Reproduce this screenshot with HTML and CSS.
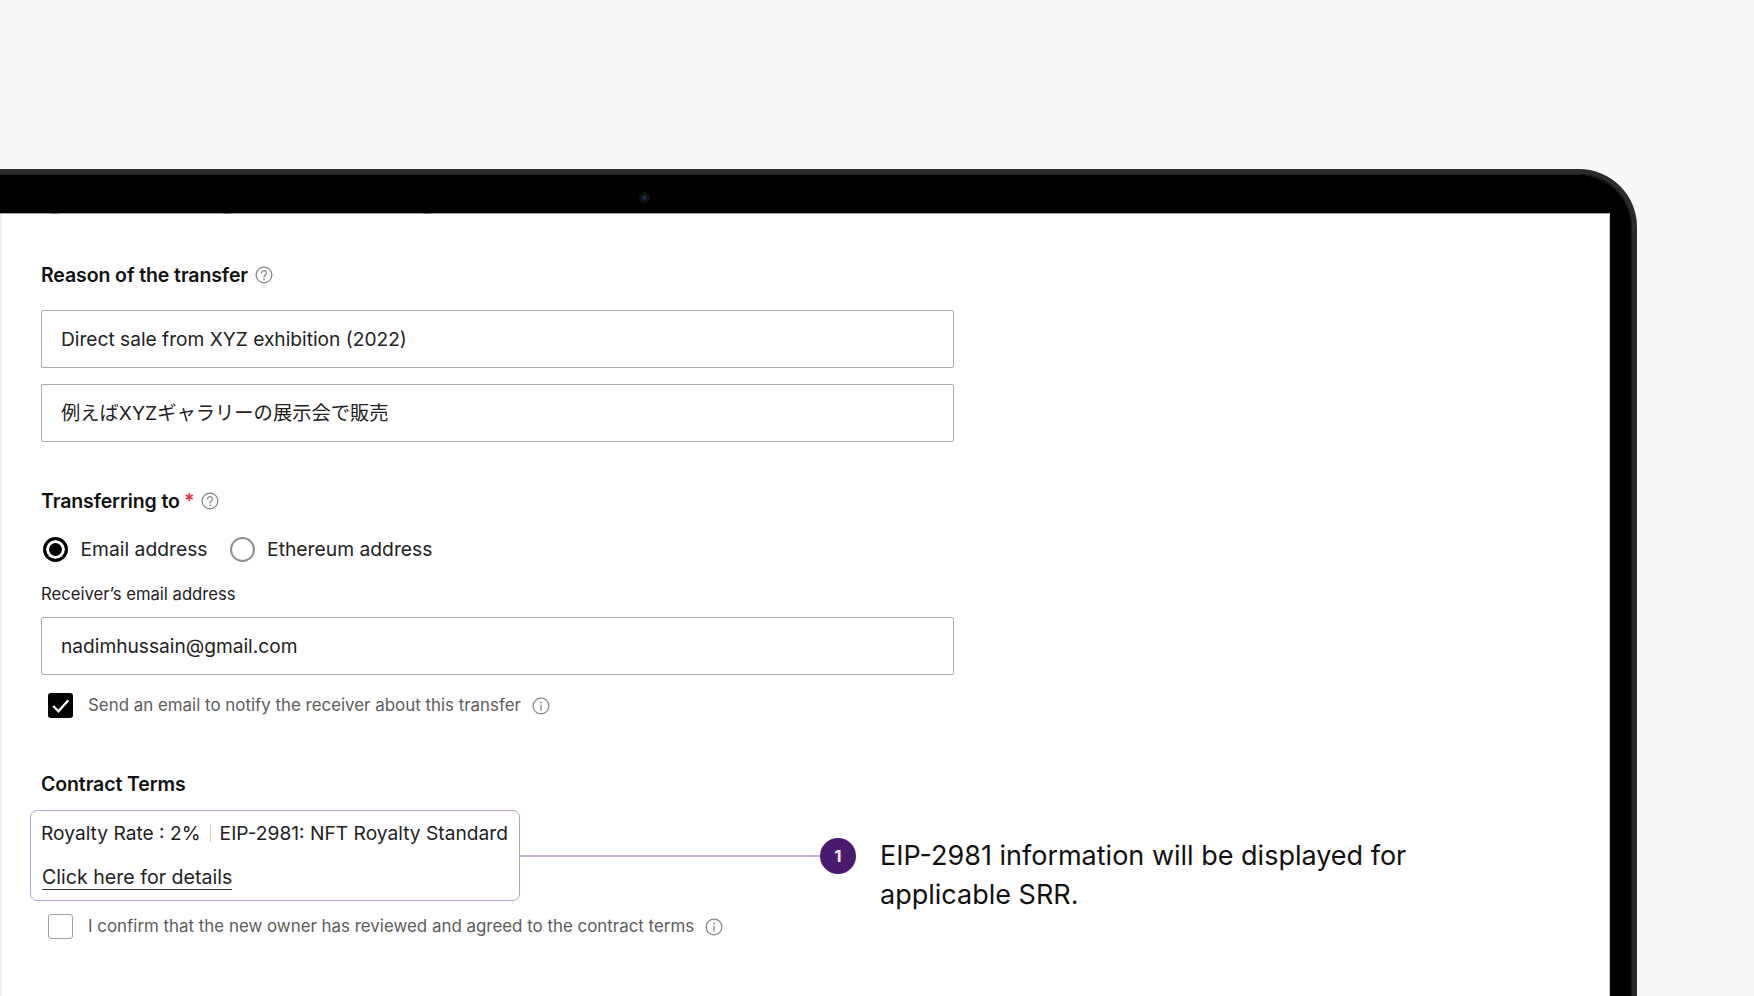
FILE: index.html
```html
<!DOCTYPE html>
<html lang="en">
<head>
<meta charset="utf-8">
<title>Transfer form</title>
<link rel="stylesheet" href="styles.css">
</head>
<body>
<main class="stage">
  <div class="laptop">
    <div class="bezel">
      <div class="camera-bar"><span class="camera"><span class="lens"></span></span></div>
      <div class="screen">
        <div class="clipped-row"><i class="speck s1"></i><i class="speck s2"></i><i class="speck s3"></i></div>

        <div class="label label-first">Reason of the transfer
          <svg class="icon help" viewBox="0 0 16 16"><circle cx="8" cy="8" r="7"/><path d="M5.9 6.2a2.1 2.1 0 1 1 3.3 1.7c-.8.5-1.2.9-1.2 1.8"/><circle class="dot" cx="8" cy="11.8" r=".8"/></svg>
        </div>
        <div class="input input-first">Direct sale from XYZ exhibition (2022)</div>
        <div class="input input-next input-jp">例えばXYZギャラリーの展示会で販売</div>

        <div class="label label-transfer">Transferring to <span class="req">*</span>
          <svg class="icon help" viewBox="0 0 16 16"><circle cx="8" cy="8" r="7"/><path d="M5.9 6.2a2.1 2.1 0 1 1 3.3 1.7c-.8.5-1.2.9-1.2 1.8"/><circle class="dot" cx="8" cy="11.8" r=".8"/></svg>
        </div>
        <div class="radios">
          <span class="radio radio-on"></span><span class="radio-text">Email address</span>
          <span class="radio radio-off"></span><span class="radio-text">Ethereum address</span>
        </div>
        <div class="sublabel">Receiver’s email address</div>
        <div class="input input-email">nadimhussain@gmail.com</div>
        <div class="check-row check-row-first">
          <span class="box box-on"><svg viewBox="0 0 24 24"><path d="M5 12.5l5 5L19.500 7"/></svg></span>
          <span class="check-text">Send an email to notify the receiver about this transfer</span>
          <svg class="icon info" viewBox="0 0 16 16"><circle cx="8" cy="8" r="7"/><path d="M8 7.300v4.400"/><circle class="dot" cx="8" cy="4.800" r=".8"/></svg>
        </div>

        <div class="label label-contract">Contract Terms</div>
        <div class="callout-row">
          <div class="terms">
            <div class="terms-line"><span>Royalty Rate : 2%</span><span class="sep"></span><span>EIP-2981: NFT Royalty Standard</span></div>
            <a class="terms-link">Click here for details</a>
          </div>
          <span class="connector"></span>
          <span class="badge">1</span>
          <p class="note">EIP-2981 information will be displayed for applicable SRR.</p>
        </div>
        <div class="check-row check-row-second">
          <span class="box box-off"></span>
          <span class="check-text">I confirm that the new owner has reviewed and agreed to the contract terms</span>
          <svg class="icon info" viewBox="0 0 16 16"><circle cx="8" cy="8" r="7"/><path d="M8 7.300v4.400"/><circle class="dot" cx="8" cy="4.800" r=".8"/></svg>
        </div>
      </div>
    </div>
  </div>
</main>
</body>
</html>
```

FILE: styles.css
```css
* { box-sizing: border-box; }
html, body { margin: 0; padding: 0; }
body {
  background: #f8f8f8;
  font-family: Inter, "Noto Sans CJK JP", sans-serif;
  color: #1a1a1a;
}
.stage {
  width: 1754px;
  height: 996px;
  overflow: hidden;
  padding-top: 169px;
}
.laptop {
  width: 1637px;
  height: 827px;
  background: #2b2b2b;
  padding: 5px 5px 0 0;
  border-top-right-radius: 58px;
}
.bezel {
  height: 100%;
  background: #000;
  padding-right: 22px;
  border-top-right-radius: 53px;
  box-shadow: inset -1px 1px 0 #1a1a1a;
}
.camera-bar {
  height: 39px;
  padding-left: 639px;
  display: flex;
  align-items: center;
  padding-top: 8px;
}
.camera {
  width: 11px;
  height: 11px;
  border-radius: 50%;
  background: #111;
  display: flex;
  align-items: center;
  justify-content: center;
}
.lens {
  width: 5px;
  height: 5px;
  border-radius: 50%;
  background: #1a2a4d;
}
.screen {
  height: 800px;
  background: #fff;
  padding-left: 41px;
  border-top: 1px solid #a4a4a4;
  border-right: 1px solid #d0d0d0;
  box-shadow: inset 2px 0 0 #f0f0f0;
}
.clipped-row { height: 0; position: relative; }
.speck {
  position: absolute;
  top: -1px;
  width: 8px;
  height: 1px;
  background: #777;
}
.s1 { left: 10px; }
.s2 { left: 182px; }
.s3 { left: 382px; }

.label {
  font-size: 19.500px;
  font-weight: 600;
  line-height: 24px;
  display: flex;
  align-items: center;
  letter-spacing: -0.1px;
  color: #111;
}
.label-first { margin-top: 49px; }
.label-transfer { margin-top: 47px; }
.label-contract { margin-top: 54px; }
.req { color: #e5344c; margin-left: 4px; }

.icon {
  width: 18px;
  height: 18px;
  flex: none;
  fill: none;
  stroke: #858585;
  stroke-width: 1.1;
  stroke-linecap: round;
}
.icon .dot { fill: #858585; stroke: none; }
.help { margin-left: 7px; }
.info { margin-left: 11px; }

.input {
  width: 913px;
  height: 58px;
  border: 1.5px solid #a9acb1;
  border-radius: 2px;
  padding-left: 19px;
  display: flex;
  align-items: center;
  font-size: 19.150px;
  color: #222;
}
.input-first { margin-top: 23px; }
.input-next { margin-top: 16px; }
.input-jp { padding-bottom: 3px; font-size: 19.300px; }
.input-email { margin-top: 12px; }

.radios {
  margin-top: 23px;
  display: flex;
  align-items: center;
  height: 26px;
  font-size: 19.300px;
  color: #222;
}
.radio {
  width: 25px;
  height: 25px;
  border-radius: 50%;
  flex: none;
  background: #fff;
}
.radio-on {
  margin-left: 2px;
  border: 3px solid #000;
  box-shadow: inset 0 0 0 3px #fff;
  background: #000;
}
.radio-off {
  border: 2px solid #8e8e8e;
  margin-left: 22px;
}
.radio-text { margin-left: 12.500px; }

.sublabel {
  margin-top: 21px;
  line-height: 22px;
  font-size: 16.650px;
  color: #222;
}

.check-row {
  display: flex;
  align-items: center;
  height: 25px;
  padding-left: 7px;
  font-size: 16.900px;
  color: #5c5c5c;
}
.check-row-first { margin-top: 18px; }
.check-row-second { margin-top: 13px; }
.box {
  width: 25px;
  height: 25px;
  border-radius: 3px;
  flex: none;
  display: flex;
}
.box-on { background: #000; }
.box-on svg {
  width: 25px;
  height: 25px;
  fill: none;
  stroke: #fff;
  stroke-width: 2.200;
}
.box-off { border: 1.5px solid #a0a3ad; }
.check-text { margin-left: 15px; padding-bottom: 1px; }

.callout-row {
  margin-top: 14px;
  margin-left: -11px;
  display: flex;
  align-items: center;
}
.terms {
  width: 490px;
  height: 91px;
  flex: none;
  border: 1.5px solid #b9a0cc;
  border-radius: 7px;
  padding: 10px 0 0 10px;
  font-size: 19.600px;
  color: #222;
}
.terms-line {
  display: flex;
  align-items: center;
  height: 24px;
  white-space: nowrap;
  font-size: 19.200px;
}
.sep {
  width: 1px;
  height: 18px;
  background: #ccc;
  margin: 0 9px;
}
.terms-link {
  display: inline-block;
  margin-top: 20px;
  margin-left: 1px;
  line-height: 24px;
  border-bottom: 1.5px solid #333;
  color: #222;
}
.connector {
  width: 300px;
  height: 2px;
  background: #c4b0d6;
  flex: none;
}
.badge {
  width: 36px;
  height: 36px;
  border-radius: 50%;
  background: #4a1a6e;
  color: #fff;
  font-size: 16px;
  font-weight: 700;
  display: flex;
  align-items: center;
  justify-content: center;
  flex: none;
}
.note {
  margin: 26px 0 -13px 24px;
  width: 560px;
  align-self: flex-start;
  font-size: 27px;
  line-height: 39px;
  color: #111;
}
```
